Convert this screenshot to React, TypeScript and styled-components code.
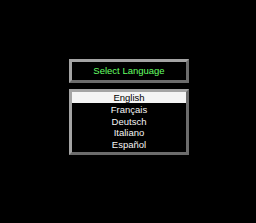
import { createGlobalStyle } from "styled-components"
import styled from "styled-components"

const GlobalStyle = createGlobalStyle`
    html, body {
        margin: 0;
        padding: 0;
        background-color: #000000;
    }
`

const Screen = styled.main`
    width: 256px;
    height: 223px;
    background-color: #000000;
    display: flex;
    flex-direction: column;
    align-items: center;
    padding: 59px 0 0 2px;
    box-sizing: border-box;
    gap: 6px;
    font-family: "Liberation Sans", Arial, sans-serif;
    font-size: 9.5px;
`

const Panel = styled.div`
    width: 120px;
    box-sizing: border-box;
    border: 3px solid;
    border-color: #a4a4a4 #6c6c6c #6c6c6c #a4a4a4;
    background-color: #000000;
`

const Title = styled.div`
    height: 18px;
    line-height: 18px;
    text-align: center;
    color: #66ff66;
`

const List = styled.ul`
    list-style: none;
    margin: 0;
    padding: 0 0 1px 0;
`

const Item = styled.li<{ $selected?: boolean }>`
    height: 11px;
    line-height: 11px;
    margin-bottom: 0.75px;
    text-align: center;
    color: ${(p) => (p.$selected ? "#000000" : "#f4f4f4")};
    background-color: ${(p) => (p.$selected ? "#f4f4f4" : "transparent")};
`

const languages = ["English", "Français", "Deutsch", "Italiano", "Español"]

export default function App() {
    return (
        <>
            <GlobalStyle />
            <Screen>
                <Panel>
                    <Title>Select Language</Title>
                </Panel>
                <Panel>
                    <List>
                        {languages.map((lang, i) => (
                            <Item key={lang} $selected={i === 0}>
                                {lang}
                            </Item>
                        ))}
                    </List>
                </Panel>
            </Screen>
        </>
    )
}
